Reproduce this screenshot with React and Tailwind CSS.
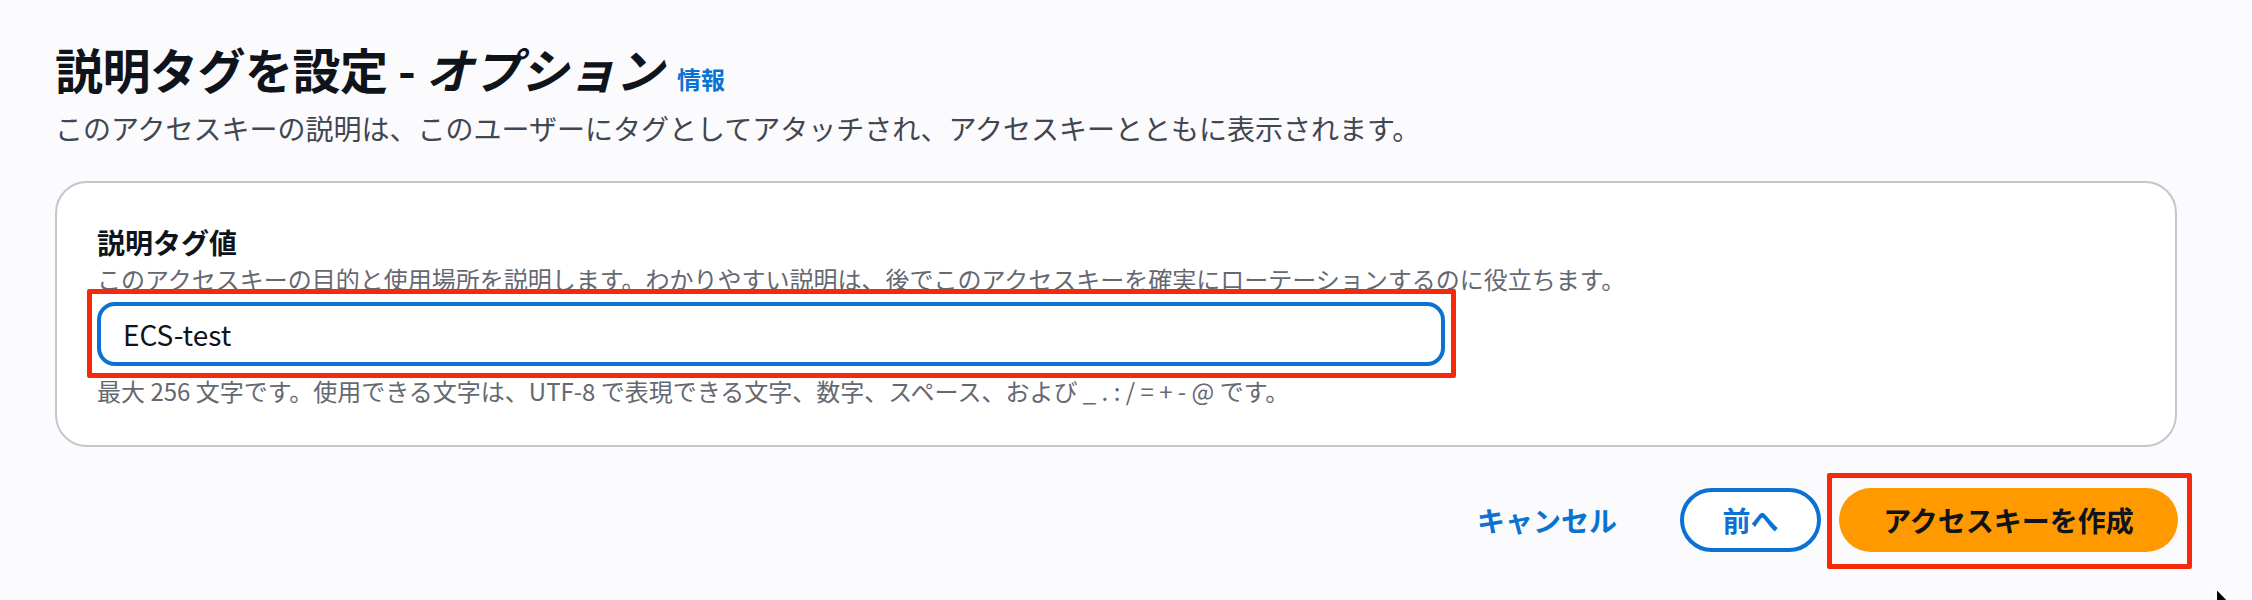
import React from "react";

export default function App() {
  return (
    <div className="relative min-h-[600px] w-[2252px] overflow-hidden bg-[#fbfbfd] pl-[55px] pr-[75px] pt-[38px] font-['Noto_Sans_CJK_JP','Noto_Sans',sans-serif] text-[#0f141a]">
      <div className="flex items-baseline">
        <h1 className="text-[48px] font-bold leading-[60px] tracking-[-0.5px] text-[#0f141a]">
          説明タグを設定 - <i className="italic">オプション</i>
        </h1>
        <a className="ml-[14px] text-[24px] font-bold leading-[32px] text-[#0972d3]">情報</a>
      </div>
      <p className="mt-[10px] text-[28px] leading-[40px] text-[#424650]">
        このアクセスキーの説明は、このユーザーにタグとしてアタッチされ、アクセスキーとともに表示されます。
      </p>

      <div className="mt-[33px] rounded-[32px] border-2 border-[#c6c6cd] bg-white pb-[38px] pl-[40px] pr-[40px] pt-[41px]">
        <div className="text-[28px] font-bold leading-[36px] text-[#0f141a]">説明タグ値</div>
        <div className="mt-[3px] text-[24px] leading-[32px] text-[#656871]">
          このアクセスキーの目的と使用場所を説明します。わかりやすい説明は、後でこのアクセスキーを確実にローテーションするのに役立ちます。
        </div>
        <div className="relative mt-[7px] h-[64px] w-[1348px]">
          <div className="flex h-full w-full items-center rounded-[18px] border-4 border-[#0972d3] bg-white pl-[22px]">
            <span className="text-[28px] leading-[36px] text-[#0f141a]">ECS-test</span>
          </div>
          <div className="pointer-events-none absolute -bottom-[12px] -left-[10px] -right-[11px] -top-[13px] rounded-[2px] border-[5px] border-[#f8290b]" />
        </div>
        <div className="mt-[9px] text-[24px] leading-[32px] text-[#656871]">
          最大 256 文字です。使用できる文字は、UTF-8 で表現できる文字、数字、スペース、および _ . : / = + - @ です。
        </div>
      </div>

      <div className="mt-[41px] flex items-center justify-end">
        <span className="text-[28px] font-bold leading-[36px] text-[#0972d3]">キャンセル</span>
        <div className="ml-[63px] flex h-[64px] w-[141px] items-center justify-center rounded-full border-4 border-[#0972d3] bg-white">
          <span className="text-[28px] font-bold leading-[36px] text-[#0972d3]">前へ</span>
        </div>
        <div className="relative ml-[18px] mr-[-1px]">
          <div className="flex h-[64px] w-[339px] items-center justify-center rounded-full bg-[#ff9900]">
            <span className="text-[28px] font-bold leading-[36px] text-[#0f141a]">アクセスキーを作成</span>
          </div>
          <div className="pointer-events-none absolute -bottom-[17px] -left-[12px] -right-[14px] -top-[15px] rounded-[2px] border-[5px] border-[#f8290b]" />
        </div>
      </div>

      <svg className="absolute left-[2213px] top-[585px]" width="24" height="36" viewBox="0 0 24 36">
        <path d="M3 3 L3 30 L9.5 24 L14 34 L18 32 L13.5 22.5 L22 22.5 Z" fill="#000" stroke="#fff" strokeWidth="2" strokeLinejoin="round" />
      </svg>
    </div>
  );
}
